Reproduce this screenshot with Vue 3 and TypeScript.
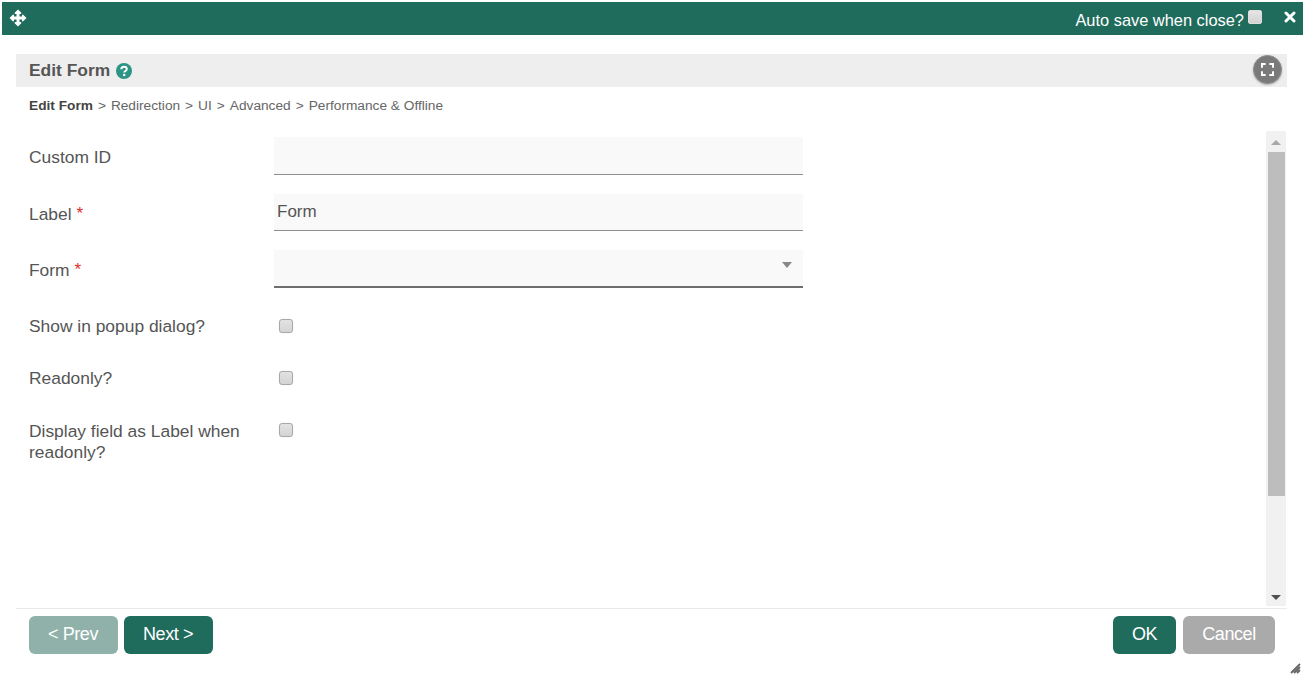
<script setup lang="ts">
const crumbs: string[] = ['Redirection', 'UI', 'Advanced', 'Performance & Offline']
</script>

<template>
  <div class="dialog">
    <header class="titlebar">
      <svg class="move" viewBox="0 0 18 18" width="18" height="18">
        <path fill="#fff" d="M9 0.5 L12.3 3.8 Q12.7 4.6 11.8 5 L10.5 5 L10.5 7.5 L13 7.5 L13 6.2 Q13.4 5.3 14.2 5.7 L17.5 9 L14.2 12.3 Q13.4 12.7 13 11.8 L13 10.5 L10.5 10.5 L10.5 13 L11.8 13 Q12.7 13.4 12.3 14.2 L9 17.5 L5.7 14.2 Q5.3 13.4 6.2 13 L7.5 13 L7.5 10.5 L5 10.5 L5 11.8 Q4.6 12.7 3.8 12.3 L0.5 9 L3.8 5.7 Q4.6 5.3 5 6.2 L5 7.5 L7.5 7.5 L7.5 5 L6.2 5 Q5.3 4.6 5.7 3.8 Z" />
      </svg>
      <div class="title-right">
        <span class="autosave">Auto save when close?</span>
        <span class="top-check"></span>
        <svg class="close" viewBox="0 0 12 12" width="12" height="12">
          <path d="M2 2 L10 10 M10 2 L2 10" stroke="#fff" stroke-width="3" stroke-linecap="round" fill="none" />
        </svg>
      </div>
    </header>

    <main class="panel">
      <div class="panel-head">
        <div class="panel-title">
          <span>Edit Form</span>
          <svg class="help" viewBox="0 0 16 16" width="16" height="16">
            <circle cx="8" cy="8" r="8" fill="#2b9484" />
            <path d="M5.3 6.3 C5.3 4.6 6.5 3.7 8 3.7 C9.6 3.7 10.8 4.7 10.8 6.1 C10.8 7.9 8.2 8 8.2 9.6" stroke="#fff" stroke-width="2" fill="none" />
            <rect x="7.1" y="10.9" width="2.2" height="2.2" fill="#fff" />
          </svg>
        </div>
        <button class="expand" type="button" aria-label="Full screen">
          <svg viewBox="0 0 14 14" width="13" height="13">
            <path d="M1 5 V1 H5 M9 1 H13 V5 M13 9 V13 H9 M5 13 H1 V9" stroke="#fff" stroke-width="2.2" fill="none" />
          </svg>
        </button>
      </div>

      <nav class="crumbs">
        <b>Edit Form</b>
        <template v-for="c in crumbs" :key="c">
          <span class="sep">&gt;</span><span>{{ c }}</span>
        </template>
      </nav>

      <div class="scroll-area">
        <form class="fields" @submit.prevent>
          <div class="row row-custom">
            <label class="lbl">Custom ID</label>
            <div class="input"></div>
          </div>
          <div class="row row-label">
            <label class="lbl">Label <i>*</i></label>
            <div class="input">Form</div>
          </div>
          <div class="row row-form">
            <label class="lbl">Form <i>*</i></label>
            <div class="input select"><span class="caret"></span></div>
          </div>
          <div class="row row-check first-check">
            <label class="lbl">Show in popup dialog?</label>
            <span class="check"></span>
          </div>
          <div class="row row-check second-check">
            <label class="lbl">Readonly?</label>
            <span class="check"></span>
          </div>
          <div class="row row-check">
            <label class="lbl">Display field as Label when readonly?</label>
            <span class="check"></span>
          </div>
        </form>
        <div class="scrollbar">
          <span class="arrow up"></span>
          <div class="track"><div class="thumb"></div></div>
          <span class="arrow down"></span>
        </div>
      </div>

      <footer class="actions">
        <div class="group">
          <button class="btn prev" type="button">&lt; Prev</button>
          <button class="btn next" type="button">Next &gt;</button>
        </div>
        <div class="group">
          <button class="btn ok" type="button">OK</button>
          <button class="btn cancel" type="button">Cancel</button>
        </div>
      </footer>
    </main>

    <svg class="grip" viewBox="0 0 12 12" width="12" height="12">
      <path d="M11 2 L2 11 M11 5 L5 11 M11 8 L8 11" stroke="#666" stroke-width="1.8" fill="none" />
    </svg>
  </div>
</template>

<style scoped>
.dialog {
  position: relative;
  width: 1305px;
  height: 677px;
  overflow: hidden;
  background: #fff;
  font-family: "Liberation Sans", Arial, sans-serif;
  color: #555;
}
.titlebar {
  display: flex;
  align-items: center;
  justify-content: space-between;
  height: 33px;
  margin: 2px 2px 0;
  padding: 0 7px 0 7px;
  background: #1f6b5c;
  color: #fff;
}
.move { margin-top: -1px; }
.title-right { display: flex; align-items: center; }
.autosave { font-size: 16.4px; margin-top: 3px; }
.top-check {
  width: 14px;
  height: 14px;
  margin: -4px 0 0 4px;
  border-radius: 2px;
  background: linear-gradient(#e6e6e6, #d2d2d2);
  border: 1px solid #ddd;
  box-sizing: border-box;
}
.close { margin: -3px 0 0 22px; }
.panel {
  display: flex;
  flex-direction: column;
  margin: 19px 18px 0 16px;
}
.panel-head {
  display: flex;
  align-items: center;
  justify-content: space-between;
  height: 33px;
  padding: 0 5px 0 13px;
  background: #eee;
}
.panel-title {
  display: flex;
  align-items: center;
  gap: 6px;
  font-size: 17.4px;
  font-weight: 700;
  color: #555;
}
.help { margin-top: 0; }
.expand {
  display: flex;
  align-items: center;
  justify-content: center;
  width: 29px;
  height: 29px;
  margin-top: -3px;
  padding: 0;
  border: 1px solid #8f8f8f;
  border-radius: 50%;
  background: #7a7a7a;
  box-shadow: 0 1px 2px rgba(0, 0, 0, 0.25);
}
.crumbs {
  display: flex;
  align-items: center;
  height: 17px;
  margin: 10px 0 0 13px;
  font-size: 13.7px;
  color: #666;
}
.crumbs b { color: #444; }
.sep { margin: 0 5px; }
.scroll-area {
  display: flex;
  justify-content: space-between;
  height: 477px;
  margin-top: 17px;
  border-bottom: 1px solid #eaeaea;
}
.fields {
  display: flex;
  flex-direction: column;
  width: 787px;
  padding: 6px 0 0 13px;
}
.row {
  display: grid;
  grid-template-columns: 245px 529px;
  align-items: start;
}
.row-custom { height: 57px; }
.row-label { height: 56px; }
.row-form { height: 52px; }
.row-check { height: 52px; }
.first-check { height: 52px; padding-top: 3px; box-sizing: border-box; }
.lbl {
  font-size: 17.4px;
  line-height: 21px;
  padding-top: 10px;
  color: #555;
}
.row-check .lbl { padding-top: 15px; }
.first-check .lbl { padding-top: 11px; }
.second-check .lbl { padding-top: 14px; }
.row-label .lbl, .row-form .lbl { padding-top: 9.5px; }
.lbl i {
  font-style: normal;
  font-size: 17px;
  color: #e02b2b;
  position: relative;
  top: -1px;
}
.input {
  box-sizing: border-box;
  height: 38px;
  padding: 0 3px 4px;
  background: #f9f9f9;
  border-bottom: 1px solid #8e8e8e;
  font-size: 17px;
  line-height: 35px;
  color: #555;
}
.row-label .input { height: 37px; }
.select {
  position: relative;
  border-bottom: 2px solid #6e6e6e;
}
.caret {
  position: absolute;
  top: 12px;
  right: 11px;
  border-left: 5px solid transparent;
  border-right: 5px solid transparent;
  border-top: 6px solid #888;
}
.check {
  box-sizing: border-box;
  display: block;
  width: 14px;
  height: 14px;
  margin: 17px 0 0 5px;
  border: 1px solid #a8a8a8;
  border-radius: 3px;
  background: linear-gradient(#e2e2e2, #d4d4d4);
  box-shadow: 0 0 1px #ccc;
}
.first-check .check { margin-top: 14px; }
.scrollbar {
  display: flex;
  flex-direction: column;
  align-items: center;
  box-sizing: border-box;
  width: 20px;
  height: 475px;
  margin-right: 1px;
  background: #f1f1f1;
}
.arrow {
  flex: none;
  width: 0;
  height: 0;
  border-left: 5px solid transparent;
  border-right: 5px solid transparent;
}
.arrow.up { margin: 9px 0 7px; border-bottom: 5px solid #a8a8a8; }
.arrow.down { margin: 7px 0 6px; border-top: 5px solid #505050; }
.track { flex: 1; width: 17px; }
.thumb { height: 344px; background: #bdbdbd; }
.actions {
  display: flex;
  justify-content: space-between;
  padding: 7px 12px 0 13px;
}
.group { display: flex; gap: 6px; }
.group + .group { gap: 7px; }
.btn {
  height: 38px;
  padding: 0 0 2px;
  border: 0;
  border-radius: 6px;
  color: #fff;
  font: 400 18px "Liberation Sans", Arial, sans-serif;
  letter-spacing: -0.4px;
}
.prev { width: 89px; padding-right: 1px; background: #8fb1a9; }
.next { width: 89px; padding-right: 1px; background: #1f6b5c; }
.ok { width: 63px; background: #1f6b5c; }
.cancel { width: 92px; background: #aaa; }
.grip { position: absolute; right: 4px; bottom: 3px; }
</style>
